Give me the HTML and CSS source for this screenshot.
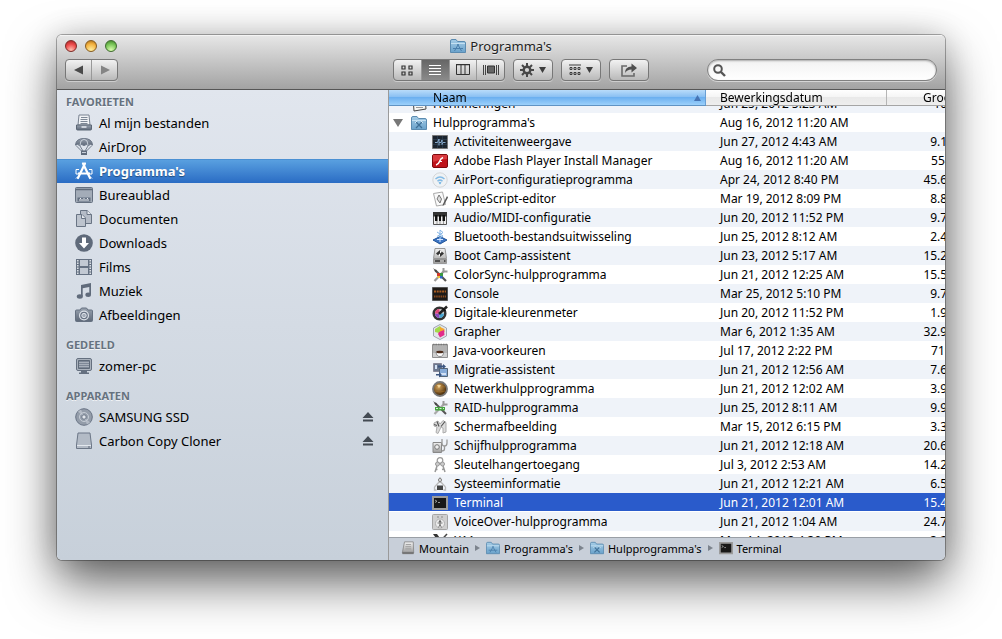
FILE: index.html
```
<!DOCTYPE html>
<html lang="nl">
<head>
  <meta charset="UTF-8">
  <meta name="viewport" content="width=device-width, initial-scale=1.0">
  <title>Programma's</title>
  <link rel="stylesheet" href="styles.css">
</head>
<body>
  <svg class="sprite" aria-hidden="true">
    <defs>
      <linearGradient id="steel" x1="0" y1="0" x2="0" y2="1">
        <stop offset="0" stop-color="#9aa3b0"/>
        <stop offset="1" stop-color="#5d6878"/>
      </linearGradient>
      <linearGradient id="blue" x1="0" y1="0" x2="0" y2="1">
        <stop offset="0" stop-color="#a5cce6"/>
        <stop offset="1" stop-color="#6aa2cb"/>
      </linearGradient>
      <linearGradient id="silver" x1="0" y1="0" x2="0" y2="1">
        <stop offset="0" stop-color="#f2f2f2"/>
        <stop offset="1" stop-color="#9c9c9c"/>
      </linearGradient>
      <radialGradient id="amber" cx="0.4" cy="0.35" r="0.6">
        <stop offset="0" stop-color="#d8a860"/>
        <stop offset="1" stop-color="#4a2c08"/>
      </radialGradient>
    </defs>

    <!-- folders -->
    <symbol id="folder" viewBox="0 0 16 16">
      <path d="M.5 3q0-1.500 1.500-1.500h4l1.500 2H14q1.500 0 1.500 1.500v9.500H.5z" fill="url(#blue)" stroke="#5b8bb0"/>
      <path d="M1 5.500h14" stroke="#c4e0f2"/>
    </symbol>
    <symbol id="folder-apps" viewBox="0 0 16 16">
      <use href="#folder"/>
      <path d="M8.500 6l-4 7M7.500 6l4 7M3 10.500h10" stroke="#4a7fac" fill="none"/>
    </symbol>
    <symbol id="folder-utils" viewBox="0 0 16 16">
      <use href="#folder"/>
      <path d="M5 7l6 6M11 7l-6 6" stroke="#3f6f96" stroke-width="1.300"/>
      <path d="M4 8l2-2M10 6l2 2" stroke="#d3e8f5"/>
    </symbol>

    <!-- sidebar -->
    <symbol id="all-files" viewBox="0 0 18 18">
      <path d="M4 1h10l1 10H3z" fill="#f1f3f6" stroke="#788290"/>
      <path d="M6 3.500h6.500M5.500 5.500h7M5.500 7.500h7M5.500 9.500h7" stroke="#7e8896"/>
      <path d="M1.500 11h15v4q0 1-1 1h-13q-1 0-1-1z" fill="url(#steel)" stroke="#5b6675"/>
      <path d="M6.500 13h5" stroke="#e6eaf0" stroke-width="1.500"/>
    </symbol>
    <symbol id="airdrop" viewBox="0 0 18 18">
      <path d="M.5 7Q1 .5 9 .5T17.500 7Q15.500 5.500 13.500 7.500 11.500 5.500 9 7.500 6.500 5.500 4.500 7.500 2.500 5.500.5 7z" fill="url(#steel)" stroke="#657080"/>
      <path d="M5 7Q5 2 9 1M13 7Q13 2 9 1" stroke="#c9d0da" fill="none"/>
      <path d="M1 7.500l6 6M17 7.500l-6 6M5 8l3 5M13 8l-3 5" stroke="#747f8e" fill="none"/>
      <path d="M6 12.500h6v4.500H6z" fill="#606b7b"/>
      <path d="M7 14.500h4" stroke="#c9d0da"/>
    </symbol>
    <symbol id="apps" viewBox="0 0 18 18">
      <path d="M10 1.500L3 16M8 1.500L15 16" stroke="#fff" stroke-width="2.200" stroke-linecap="round"/>
      <path d="M3 11.500h12" stroke="#fff" stroke-width="2"/>
      <path d="M4 7.500H1V12h2M14 7.500h3V12h-2M1 16.500l2-2M17 16.500l-2-2" stroke="#fff" fill="none"/>
    </symbol>
    <symbol id="desktop" viewBox="0 0 18 18">
      <rect x=".5" y="1.500" width="17" height="15" rx="1" fill="#a3acb8" stroke="#657080"/>
      <path d="M1 3.500h16" stroke="#5f6a79" stroke-width="1.500"/>
      <path d="M2.500 11.500h13v4h-13z" fill="#647081"/>
      <path d="M4 14h10M5 12.500h1M8.500 12.500h1M12 12.500h1" stroke="#e8ecf1"/>
    </symbol>
    <symbol id="documents" viewBox="0 0 18 18">
      <path d="M5.500.500H12l4.500 4v9h-11z" fill="#b5bcc7" stroke="#697484"/>
      <path d="M12 .5v4h4.500" fill="#e6eaef" stroke="#697484"/>
      <path d="M1.500 4.500H7L10.500 8v8.500h-9z" fill="#bdc4ce" stroke="#697484"/>
      <path d="M6.500 4.500v4h4" fill="#e6eaef" stroke="#697484"/>
    </symbol>
    <symbol id="downloads" viewBox="0 0 18 18">
      <circle cx="9" cy="9" r="8.800" fill="#5f6a7a"/>
      <path d="M7 3.500h4V9h3l-5 5.500L4 9h3z" fill="#fff"/>
    </symbol>
    <symbol id="movies" viewBox="0 0 18 18">
      <path d="M1 1h16v16H1z" fill="#657182"/>
      <path d="M5 2h8v6H5zM5 10h8v6H5z" fill="#c2c9d3"/>
      <path d="M2.800 2v15M15.200 2v15" stroke="#e9edf2" stroke-width="1.400" stroke-dasharray="1.500 1"/>
    </symbol>
    <symbol id="music" viewBox="0 0 18 18">
      <path d="M6 3l10-2v11.500h-1.700V5L7.700 6.300v8.200H6z" fill="#606b7b"/>
      <ellipse cx="4.800" cy="14.500" rx="3" ry="2.200" fill="#606b7b"/>
      <ellipse cx="13.200" cy="12.800" rx="2.800" ry="2.200" fill="#606b7b"/>
    </symbol>
    <symbol id="pictures" viewBox="0 0 18 18">
      <path d="M1.500 4H5l1.500-2h5L13 4h3.500q1 0 1 1v9.500q0 1-1 1h-15q-1 0-1-1V5q0-1 1-1z" fill="url(#steel)" stroke="#657080"/>
      <circle cx="9" cy="9.500" r="5" fill="#dde2e9"/>
      <circle cx="9" cy="9.500" r="3.800" fill="#687384"/>
      <circle cx="9" cy="9.500" r="2.200" fill="#a4adb9" stroke="#dfe3ea"/>
    </symbol>
    <symbol id="computer" viewBox="0 0 18 18">
      <rect x="1.500" y="1.500" width="15" height="12" rx="1.500" fill="#aab2bd" stroke="#657080"/>
      <path d="M3.500 3.500h11v8h-11z" fill="#7e8897" stroke="#5f6a79"/>
      <path d="M4 5.500h10M4 7.500h10M4 9.500h10" stroke="#a8b0bb"/>
      <path d="M6 14h6v1.500h2V17H4v-1.500h2z" fill="#657080"/>
    </symbol>
    <symbol id="disc" viewBox="0 0 18 18">
      <circle cx="9" cy="9" r="8.300" fill="#949daa" stroke="#687384"/>
      <path d="M9 9L3 3.500 6 1.500zM9 9l6 5.500-3 2z" fill="#b4bbc6"/>
      <circle cx="9" cy="9" r="4.500" fill="none" stroke="#c6cdd6"/>
      <circle cx="9" cy="9" r="2.200" fill="#e2e6ec" stroke="#6e7989"/>
    </symbol>
    <symbol id="drive" viewBox="0 0 18 18">
      <path d="M3 1h12l1.500 12v3.500h-15V13z" fill="#b3bbc6" stroke="#6c7787"/>
      <path d="M2 13.500h14" stroke="#e3e8ee"/>
      <path d="M13 15h2" stroke="#5e6979"/>
    </symbol>

    <!-- utilities -->
    <symbol id="reminders" viewBox="0 0 16 16">
      <path d="M2 2l12-1 1 12-12 2z" fill="#f7f7f4" stroke="#444"/>
      <path d="M5 9h7M5 11.500h7" stroke="#999"/>
    </symbol>
    <symbol id="activity" viewBox="0 0 16 16">
      <path d="M.5 1.500h15v13H.5z" fill="#1b242e" stroke="#777"/>
      <path d="M1 5.500h14M1 10.500h14M5.500 2v12M10.500 2v12" stroke="#34475a" stroke-width=".6"/>
      <path d="M3 8.500h2.500L7 5v6.500M7 8.500h2L10 6v4.500l1-2h2.500" stroke="#86a9cc" fill="none"/>
    </symbol>
    <symbol id="flash" viewBox="0 0 16 16">
      <rect x=".5" y="1.500" width="15" height="13" rx="1.500" fill="#c0141b" stroke="#7e0a0e"/>
      <path d="M1 2h14v4Q8 6 1 9z" fill="#d93a3e"/>
      <path d="M4 12q2.500-.5 3.500-3.500T11 4.500" stroke="#fff" stroke-width="1.500" fill="none"/>
      <path d="M7.500 8.500H10" stroke="#fff"/>
    </symbol>
    <symbol id="airport" viewBox="0 0 16 16">
      <circle cx="8" cy="8" r="7.200" fill="#eff2f5" stroke="#d3d6d9"/>
      <path d="M3.500 7q4.500-4 9 0M5.500 9.300q2.500-2.300 5 0" stroke="#84bbe6" stroke-width="1.500" fill="none"/>
      <path d="M6.500 10.500q1.500-1 3 0L8 12.500z" fill="#6bb0e2"/>
    </symbol>
    <symbol id="applescript" viewBox="0 0 16 16">
      <path d="M1.500 2.500l9-1.500 3 12.500-9 1.500z" fill="#fafafa" stroke="#aaa"/>
      <path d="M7 4l2.500 4L8 12 5 8z" fill="#ddd" stroke="#777"/>
      <path d="M15 5l-4 8-.5 2 1.500-1 4-7.500z" fill="#555"/>
    </symbol>
    <symbol id="midi" viewBox="0 0 16 16">
      <path d="M1.500 2.500h13v12h-13z" fill="#eee" stroke="#555"/>
      <path d="M1 2h14v4.500H1z" fill="#333"/>
      <path d="M3 5h2.500v6H3zM7 5h2v6H7zM10.500 5H13v6h-2.500z" fill="#111"/>
      <path d="M5 11v3M8 11v3M11.500 11v3" stroke="#777" stroke-width=".7"/>
    </symbol>
    <symbol id="bluetooth" viewBox="0 0 16 16">
      <path d="M1 11l7-3.500 7 3.500-7 4z" fill="#3b74c4" stroke="#205498"/>
      <path d="M5 10.500h6M8 9v4" stroke="#d6e8ff"/>
      <path d="M8 9V1l3 2.500-6 4M8 9l3-2-6-4" fill="none" stroke="#86b6e6"/>
    </symbol>
    <symbol id="bootcamp" viewBox="0 0 16 16">
      <path d="M3 .5h10l1.500 10v5h-13v-5z" fill="url(#silver)" stroke="#999"/>
      <path d="M8 2l4 3.500L8 9 4 5.500z" fill="#333"/>
      <path d="M8 2l2 1.800-2 1.700zM8 9L6 7.200l2-1.700z" fill="#fff"/>
      <path d="M2 11h12" stroke="#777"/>
      <path d="M3 13h5M12 13h1.500" stroke="#333" stroke-width="1.500"/>
    </symbol>
    <symbol id="colorsync" viewBox="0 0 16 16">
      <path d="M3 3l11 11" stroke="#555" stroke-width="2.200"/>
      <path d="M12 4L2.500 14" stroke="#999" stroke-width="2.200"/>
      <path d="M1 1l4 3-1 1.500z" fill="#444"/>
      <path d="M11.500 1v3.500h4" fill="none" stroke="#999" stroke-width="2"/>
      <path d="M5 6h3v3H5z" fill="#d33a2c"/>
      <path d="M8 6h3v3H8z" fill="#3a9a42"/>
      <path d="M8 9h2.500v2.500H8z" fill="#2f66c9"/>
      <path d="M5.500 9H8v2H5.500z" fill="#eec73b"/>
    </symbol>
    <symbol id="console" viewBox="0 0 16 16">
      <path d="M.5 1.500h15v13H.5z" fill="#1d1a18" stroke="#555"/>
      <path d="M2 5.500h12" stroke="#a85c22" stroke-width="2" stroke-dasharray="2 .7"/>
      <path d="M2 10.500h12" stroke="#8c4a1c" stroke-width="2" stroke-dasharray="1.500 .7"/>
    </symbol>
    <symbol id="colormeter" viewBox="0 0 16 16">
      <circle cx="7.500" cy="8.500" r="5.800" fill="#ddd" stroke="#333" stroke-width="2.500"/>
      <path d="M7.500 8.500V13A4.500 4.500 0 0 1 3 8.500z" fill="#8a49bf"/>
      <path d="M7.500 8.500H3A4.500 4.500 0 0 1 7.500 4z" fill="#e3477b"/>
      <path d="M7.500 8.500H12A4.500 4.500 0 0 1 7.500 13z" fill="#45a4cf"/>
      <path d="M15 1.500L7 9" stroke="#222" stroke-width="2.500"/>
      <path d="M10.500 3l3 3" stroke="#111" stroke-width="1.500"/>
    </symbol>
    <symbol id="grapher" viewBox="0 0 16 16">
      <path d="M8 .5l6.500 3.500v8L8 15.500 1.500 12V4z" fill="#e3e5ea" stroke="#a2a6b0"/>
      <path d="M3 5l5-3 2 3-3 4-4-1z" fill="#a3d94a"/>
      <path d="M8 3l4.500 2v3L8 9z" fill="#f3a52c"/>
      <path d="M7 8l5-2 .5 5L8 13.500 6 10z" fill="#e22b8b"/>
    </symbol>
    <symbol id="java" viewBox="0 0 16 16">
      <path d="M.5 1.500h15v13H.5z" fill="#b2b2b2" stroke="#909090"/>
      <path d="M1 1.500h14" stroke="#777" stroke-width="1.500" stroke-dasharray="1.500 1"/>
      <path d="M1 10h14v4H1z" fill="#cfcfcf"/>
      <path d="M4 9h7.500q0 4.500-3.500 4.500T4 9z" fill="#fff" stroke="#777" stroke-width=".8"/>
      <ellipse cx="7.800" cy="9" rx="3.500" ry="1.300" fill="#4c2a17"/>
    </symbol>
    <symbol id="migration" viewBox="0 0 16 16">
      <path d="M1.500 1.500h8v8h-8z" fill="#6a7890" stroke="#889"/>
      <path d="M7.500 6.500h8v8h-8z" fill="#86abd8" stroke="#567"/>
      <path d="M3 3h2v4H3zM9 11h5v2H9z" fill="#d2e1f5"/>
      <path d="M4 12h3v-2l3 3-3 2.500v-2H4zM6 3.500h5V2l3 2.500L11 7V5.500H6z" fill="#3a5580"/>
    </symbol>
    <symbol id="network" viewBox="0 0 16 16">
      <circle cx="8" cy="8" r="7" fill="url(#amber)" stroke="#777" stroke-width="1.800"/>
      <path d="M3 6q5-2 10 0M3 10q5 2 10 0" stroke="#b07a30" stroke-width=".5" fill="none"/>
      <path d="M5 4.500q2-1.500 4 0L7 7z" fill="#f0d49a"/>
    </symbol>
    <symbol id="raid" viewBox="0 0 16 16">
      <path d="M3 3l11 11" stroke="#555" stroke-width="2"/>
      <path d="M12 4L2.500 14" stroke="#aaa" stroke-width="2.200"/>
      <path d="M1 1l4 3-1 1.500z" fill="#444"/>
      <path d="M11.500 1v3.500h4" fill="none" stroke="#999" stroke-width="2"/>
      <path d="M3 7h10v3.500H3z" fill="#46a441"/>
      <path d="M4 8.500h2M7.500 8.500h2M11 8.500h1" stroke="#d3f3cf"/>
    </symbol>
    <symbol id="grab" viewBox="0 0 16 16">
      <path d="M2 4l4-2 2 3 3-3.500 3 2V13l-3 1V9l-2-1-3 6.500-2-1L5 8 2 7z" fill="#dcdcdc" stroke="#adadad"/>
      <path d="M5 2.500l2 5M13 2.500l-4 5M2 5.500l3 1" stroke="#555" stroke-width="1.200"/>
    </symbol>
    <symbol id="diskutil" viewBox="0 0 16 16">
      <path d="M1 4.500h8.500v10H1z" fill="url(#silver)" stroke="#888"/>
      <circle cx="5" cy="9" r="2.300" fill="#eee" stroke="#777"/>
      <path d="M10 1v4q0 3 2.500 3T15 5V1.500M12.500 8v3q0 2-3 2" stroke="#999" stroke-width="1.300" fill="none"/>
    </symbol>
    <symbol id="keychain" viewBox="0 0 16 16">
      <circle cx="8" cy="3.500" r="2.800" fill="none" stroke="#999" stroke-width="1.200"/>
      <circle cx="5.500" cy="7" r="2" fill="#ccc" stroke="#999"/>
      <circle cx="10.500" cy="7" r="2" fill="#ccc" stroke="#999"/>
      <path d="M5 9l-2 6M11 9l2 6M3.500 12l2 .5M12 12l-2 .5" stroke="#999" stroke-width="1.500"/>
    </symbol>
    <symbol id="sysinfo" viewBox="0 0 16 16">
      <path d="M8 1v4M8 5l-5.500 6M8 5l5.500 6M2.500 11v3h2M13.500 11v3h-2" stroke="#bbb" stroke-width="1.300" fill="none"/>
      <circle cx="8" cy="4" r="1.600" fill="#ddd" stroke="#888"/>
      <path d="M5 9.500h6v4.500H5z" fill="#444"/>
    </symbol>
    <symbol id="terminal" viewBox="0 0 16 16">
      <path d="M1 2h14v12H1z" fill="#181818" stroke="#9b9b9b" stroke-width="2"/>
      <path d="M3 5l2 1.300L3 7.500M6 7.500h2" stroke="#bbb" stroke-width=".8" fill="none"/>
    </symbol>
    <symbol id="voiceover" viewBox="0 0 16 16">
      <rect x=".5" y=".5" width="15" height="15" rx="1" fill="#cfcfcf" stroke="#a5a5a5"/>
      <circle cx="8" cy="9.500" r="4.500" fill="#efefef" stroke="#b0b0b0"/>
      <path d="M5 3h2M9 3h2" stroke="#888"/>
      <circle cx="8" cy="7.500" r="1.200" fill="#666"/>
      <path d="M5.500 9h5M8 9v2M8 10.500l-1.500 3M8 10.500l1.500 3" stroke="#777"/>
    </symbol>
    <symbol id="x11" viewBox="0 0 16 16">
      <path d="M1 1h4l10 14h-4z" fill="#333"/>
      <path d="M15 1L2 15" stroke="#444" stroke-width="1.500"/>
    </symbol>
    <symbol id="harddisk" viewBox="0 0 16 16">
      <path d="M4 1h10l.5 12.500H1.500z" fill="url(#silver)" stroke="#8a8a8a"/>
      <path d="M1.500 12.500h13v2.500h-13z" fill="#777"/>
      <path d="M5.500 4h6M5 6.500h6.500M5 9h6.500" stroke="#999"/>
    </symbol>

    <symbol id="eject" viewBox="0 0 12 12">
      <path d="M6 1l5.500 6H.5zM1 8.500h10v2H1z" fill="#444b53"/>
    </symbol>
  </svg>

  <main class="window">
    <header class="titlebar">
      <div class="title-row">
        <div class="lights">
          <button class="light red" aria-label="Sluit"></button>
          <button class="light yellow" aria-label="Minimaliseer"></button>
          <button class="light green" aria-label="Zoom"></button>
        </div>
        <h1 class="title"><svg class="icon"><use href="#folder-apps"/></svg>Programma's</h1>
        <div class="title-end"></div>
      </div>
      <div class="toolbar">
        <div class="nav">
          <div class="group history">
            <button class="tool" aria-label="Vorige"><svg width="10" height="10"><path d="M0 5l9-4.500v9z" fill="#4a4a4a"/></svg></button>
            <button class="tool" aria-label="Volgende"><svg width="10" height="10"><path d="M10 5L1 .5v9z" fill="#858585"/></svg></button>
          </div>
        </div>
        <div class="group views">
          <button class="tool" aria-label="Symbolen">
            <svg width="12" height="11"><path d="M1 1h3v3H1zM8 1h3v3H8zM1 7h3v3H1zM8 7h3v3H8z" fill="none" stroke="#333" stroke-width="1.200"/></svg>
          </button>
          <button class="tool active" aria-label="Lijst">
            <svg width="12" height="12"><path d="M0 1.500h12M0 4.500h12M0 7.500h12M0 10.500h12" stroke="#fff"/></svg>
          </button>
          <button class="tool" aria-label="Kolommen">
            <svg width="14" height="12"><path d="M.5.500h13v10H.5zM5 .5v10M9 .5v10" fill="none" stroke="#333"/><path d="M0 .5h14" stroke="#333" stroke-width="1.500"/></svg>
          </button>
          <button class="tool" aria-label="Cover Flow">
            <svg width="16" height="12"><path d="M.5 1v10M2.500 1v10M13.500 1v10M15.500 1v10" stroke="#444"/><path d="M4.500 2h7v7h-7z" fill="#666" stroke="#333"/></svg>
          </button>
        </div>
        <button class="tool solo" aria-label="Taak">
          <svg width="14" height="14" viewBox="0 0 14 14"><circle cx="7" cy="7" r="3.300" fill="none" stroke="#484848" stroke-width="2.400"/><path d="M7 0v3M7 11v3M0 7h3M11 7h3M2 2l2.200 2.200M9.800 9.800L12 12M12 2L9.800 4.200M4.200 9.800L2 12" stroke="#484848" stroke-width="2"/></svg>
          <svg width="7" height="6"><path d="M0 0h7L3.500 6z" fill="#3d3d3d"/></svg>
        </button>
        <button class="tool solo" aria-label="Orden">
          <svg width="12" height="12"><path d="M0 1h12" stroke="#3d3d3d"/><path d="M1 3.500h2v2H1zM5 3.500h2v2H5zM9 3.500h2v2H9zM1 8.500h2v2H1zM5 8.500h2v2H5zM9 8.500h2v2H9z" fill="none" stroke="#3d3d3d"/></svg>
          <svg width="7" height="6"><path d="M0 0h7L3.500 6z" fill="#3d3d3d"/></svg>
        </button>
        <button class="tool solo" aria-label="Deel">
          <svg width="16" height="14" viewBox="0 0 16 14"><path d="M6 3H1v10h12v-3" fill="none" stroke="#6a6a6a" stroke-width="1.600"/><path d="M4 10q0-6.500 6.500-6.500V.5L16 5l-5.500 4.500V6.500Q6 6.500 4 10z" fill="#505050"/></svg>
        </button>
        <label class="search">
          <svg width="13" height="13"><circle cx="5" cy="5" r="3.800" fill="none" stroke="#555" stroke-width="2"/><path d="M8 8l4 4" stroke="#555" stroke-width="2.400"/></svg>
          <input type="search" aria-label="Zoek">
        </label>
      </div>
    </header>

    <div class="content">
      <nav class="sidebar">
        <h2>FAVORIETEN</h2>
        <ul>
          <li><a href="#"><svg class="icon"><use href="#all-files"/></svg>Al mijn bestanden</a></li>
          <li><a href="#"><svg class="icon"><use href="#airdrop"/></svg>AirDrop</a></li>
          <li class="current"><a href="#"><svg class="icon"><use href="#apps"/></svg>Programma's</a></li>
          <li><a href="#"><svg class="icon"><use href="#desktop"/></svg>Bureaublad</a></li>
          <li><a href="#"><svg class="icon"><use href="#documents"/></svg>Documenten</a></li>
          <li><a href="#"><svg class="icon"><use href="#downloads"/></svg>Downloads</a></li>
          <li><a href="#"><svg class="icon"><use href="#movies"/></svg>Films</a></li>
          <li><a href="#"><svg class="icon"><use href="#music"/></svg>Muziek</a></li>
          <li><a href="#"><svg class="icon"><use href="#pictures"/></svg>Afbeeldingen</a></li>
        </ul>
        <h2>GEDEELD</h2>
        <ul>
          <li><a href="#"><svg class="icon"><use href="#computer"/></svg>zomer-pc</a></li>
        </ul>
        <h2>APPARATEN</h2>
        <ul>
          <li><a href="#"><svg class="icon"><use href="#disc"/></svg>SAMSUNG SSD</a><button class="eject" aria-label="Verwijder SAMSUNG SSD"><svg><use href="#eject"/></svg></button></li>
          <li><a href="#"><svg class="icon"><use href="#drive"/></svg>Carbon Copy Cloner</a><button class="eject" aria-label="Verwijder Carbon Copy Cloner"><svg><use href="#eject"/></svg></button></li>
        </ul>
      </nav>

      <section class="files">
        <div class="list" id="list">
          <table>
            <colgroup>
              <col>
              <col class="col-date">
              <col class="col-size">
            </colgroup>
            <thead>
              <tr>
                <th class="sorted"><button>Naam <svg width="7" height="6"><path d="M3.500 0L7 6H0z" fill="#4674b4"/></svg></button></th>
                <th><button>Bewerkingsdatum</button></th>
                <th class="size"><button>Grootte</button></th>
              </tr>
            </thead>
            <tbody>
              <tr><td class="parent"><div><svg class="icon"><use href="#reminders"/></svg>Herinneringen</div></td><td>Jun 25, 2012 5:25 AM</td><td>10 MB</td></tr>
              <tr><td class="parent"><div><button class="toggle" aria-label="Vouw in"><svg width="10" height="8"><path d="M0 0h10L5 8z" fill="#777"/></svg></button><svg class="icon"><use href="#folder-utils"/></svg>Hulpprogramma's</div></td><td>Aug 16, 2012 11:20 AM</td><td></td></tr>
              <tr><td><div><svg class="icon"><use href="#activity"/></svg>Activiteitenweergave</div></td><td>Jun 27, 2012 4:43 AM</td><td>9.1 MB</td></tr>
              <tr><td><div><svg class="icon"><use href="#flash"/></svg>Adobe Flash Player Install Manager</div></td><td>Aug 16, 2012 11:20 AM</td><td>554 kB</td></tr>
              <tr><td><div><svg class="icon"><use href="#airport"/></svg>AirPort-configuratieprogramma</div></td><td>Apr 24, 2012 8:40 PM</td><td>45.6 MB</td></tr>
              <tr><td><div><svg class="icon"><use href="#applescript"/></svg>AppleScript-editor</div></td><td>Mar 19, 2012 8:09 PM</td><td>8.8 MB</td></tr>
              <tr><td><div><svg class="icon"><use href="#midi"/></svg>Audio/MIDI-configuratie</div></td><td>Jun 20, 2012 11:52 PM</td><td>9.7 MB</td></tr>
              <tr><td><div><svg class="icon"><use href="#bluetooth"/></svg>Bluetooth-bestandsuitwisseling</div></td><td>Jun 25, 2012 8:12 AM</td><td>2.4 MB</td></tr>
              <tr><td><div><svg class="icon"><use href="#bootcamp"/></svg>Boot Camp-assistent</div></td><td>Jun 23, 2012 5:17 AM</td><td>15.2 MB</td></tr>
              <tr><td><div><svg class="icon"><use href="#colorsync"/></svg>ColorSync-hulpprogramma</div></td><td>Jun 21, 2012 12:25 AM</td><td>15.5 MB</td></tr>
              <tr><td><div><svg class="icon"><use href="#console"/></svg>Console</div></td><td>Mar 25, 2012 5:10 PM</td><td>9.7 MB</td></tr>
              <tr><td><div><svg class="icon"><use href="#colormeter"/></svg>Digitale-kleurenmeter</div></td><td>Jun 20, 2012 11:52 PM</td><td>1.9 MB</td></tr>
              <tr><td><div><svg class="icon"><use href="#grapher"/></svg>Grapher</div></td><td>Mar 6, 2012 1:35 AM</td><td>32.9 MB</td></tr>
              <tr><td><div><svg class="icon"><use href="#java"/></svg>Java-voorkeuren</div></td><td>Jul 17, 2012 2:22 PM</td><td>719 kB</td></tr>
              <tr><td><div><svg class="icon"><use href="#migration"/></svg>Migratie-assistent</div></td><td>Jun 21, 2012 12:56 AM</td><td>7.6 MB</td></tr>
              <tr><td><div><svg class="icon"><use href="#network"/></svg>Netwerkhulpprogramma</div></td><td>Jun 21, 2012 12:02 AM</td><td>3.9 MB</td></tr>
              <tr><td><div><svg class="icon"><use href="#raid"/></svg>RAID-hulpprogramma</div></td><td>Jun 25, 2012 8:11 AM</td><td>9.9 MB</td></tr>
              <tr><td><div><svg class="icon"><use href="#grab"/></svg>Schermafbeelding</div></td><td>Mar 15, 2012 6:15 PM</td><td>3.3 MB</td></tr>
              <tr><td><div><svg class="icon"><use href="#diskutil"/></svg>Schijfhulpprogramma</div></td><td>Jun 21, 2012 12:18 AM</td><td>20.6 MB</td></tr>
              <tr><td><div><svg class="icon"><use href="#keychain"/></svg>Sleutelhangertoegang</div></td><td>Jul 3, 2012 2:53 AM</td><td>14.2 MB</td></tr>
              <tr><td><div><svg class="icon"><use href="#sysinfo"/></svg>Systeeminformatie</div></td><td>Jun 21, 2012 12:21 AM</td><td>6.5 MB</td></tr>
              <tr class="selected"><td><div><svg class="icon"><use href="#terminal"/></svg>Terminal</div></td><td>Jun 21, 2012 12:01 AM</td><td>15.4 MB</td></tr>
              <tr><td><div><svg class="icon"><use href="#voiceover"/></svg>VoiceOver-hulpprogramma</div></td><td>Jun 21, 2012 1:04 AM</td><td>24.7 MB</td></tr>
              <tr><td><div><svg class="icon"><use href="#x11"/></svg>X11</div></td><td>May 14, 2012 4:30 PM</td><td>3.2 MB</td></tr>
            </tbody>
          </table>
        </div>
        <nav class="path">
          <a href="#"><svg class="icon"><use href="#harddisk"/></svg>Mountain</a>
          <a href="#"><svg class="icon"><use href="#folder-apps"/></svg>Programma's</a>
          <a href="#"><svg class="icon"><use href="#folder-utils"/></svg>Hulpprogramma's</a>
          <a href="#"><svg class="icon"><use href="#terminal"/></svg>Terminal</a>
        </nav>
      </section>
    </div>
  </main>

  <script>
    document.getElementById("list").scrollTop = 12;
  </script>
</body>
</html>
```
FILE: styles.css
```
* {
  box-sizing: border-box;
}
body {
  margin: 0;
  height: 100vh;
  padding: 35px 57px 79px;
  background-color: #fff;
  font-family: "Lucida Grande", "Noto Sans", sans-serif;
  font-size: 13px;
  color: #000;
}
button {
  font: inherit;
  border: none;
  padding: 0;
  background: none;
}
a {
  color: inherit;
  text-decoration: none;
}
.sprite {
  position: absolute;
  width: 0;
  height: 0;
}
.icon {
  flex: none;
  width: 16px;
  height: 16px;
}
.window {
  display: flex;
  flex-direction: column;
  height: 100%;
  border-radius: 5px;
  overflow: hidden;
  box-shadow: 0 0 0 1px rgba(0, 0, 0, 0.3), 0 0 30px rgba(0, 0, 0, 0.15), 0 22px 50px rgba(0, 0, 0, 0.62);
}

/* title bar */
.titlebar {
  background: linear-gradient(#e6e6e6, #a3a3a3);
  border-top: 1px solid #f4f4f4;
  border-bottom: 1px solid #565656;
}
.title-row {
  display: flex;
  align-items: center;
  height: 20px;
  padding: 0 8px;
}
.lights, .title-end {
  flex: 1;
}
.lights {
  display: flex;
  gap: 8px;
}
.light {
  width: 12px;
  height: 12px;
  border-radius: 50%;
  border: 1px solid #555;
}
.red {
  background: radial-gradient(circle at 50% 90%, #ffc0b0, #ee4d4d 55%, #a02020);
  border-color: #7c2a26;
}
.yellow {
  background: radial-gradient(circle at 50% 90%, #fff0a0, #f3b13f 60%, #a56a14);
  border-color: #855b20;
}
.green {
  background: radial-gradient(circle at 50% 90%, #dcffb0, #76c355 60%, #3c7a25);
  border-color: #3f6a2f;
}
.title {
  display: flex;
  align-items: center;
  gap: 4px;
  margin: 0;
  font-size: 13px;
  font-weight: normal;
  color: #222;
  text-shadow: 0 1px 0 rgba(255, 255, 255, 0.6);
}
.toolbar {
  display: flex;
  gap: 8px;
  height: 33px;
  padding: 3px 8px 8px;
}
.nav {
  flex: 0 0 320px;
}
.group, .solo {
  display: flex;
  height: 22px;
  border: 1px solid #777;
  border-radius: 4px;
  background: linear-gradient(#f2f2f2, #b9b9b9);
  box-shadow: 0 1px 0 rgba(255, 255, 255, 0.4);
}
.group {
  overflow: hidden;
}
.history {
  width: 53px;
}
.views {
  width: 112px;
}
.tool {
  display: flex;
  align-items: center;
  justify-content: center;
  gap: 5px;
}
.group .tool {
  flex: 1;
}
.group .tool + .tool {
  border-left: 1px solid #999;
}
.active {
  background: linear-gradient(#666, #8a8a8a);
}
.solo {
  width: 40px;
}
.search {
  display: flex;
  align-items: center;
  gap: 4px;
  width: 230px;
  height: 22px;
  margin-left: auto;
  padding: 0 8px 0 5px;
  border: 1px solid #808080;
  border-radius: 11px;
  background: linear-gradient(#f2f2f2, #fff);
  box-shadow: inset 0 1px 2px rgba(0, 0, 0, 0.3), 0 1px 0 rgba(255, 255, 255, 0.5);
}
.search input {
  flex: 1;
  min-width: 0;
  border: none;
  outline: none;
  background: none;
  font: inherit;
}

.content {
  display: flex;
  flex: 1;
  min-height: 0;
}

/* sidebar */
.sidebar {
  flex: 0 0 331px;
  padding-top: 3px;
  background: linear-gradient(#e1e6ee, #c7d0da);
}
.sidebar h2 {
  margin: 0;
  padding-left: 9px;
  font-size: 11px;
  line-height: 18px;
  color: #66727f;
  text-shadow: 0 1px 0 rgba(255, 255, 255, 0.7);
}
.sidebar ul {
  list-style: none;
  margin: 0 0 9px;
  padding: 0;
}
.sidebar li {
  display: flex;
  align-items: center;
  height: 24px;
  padding: 0 14px 0 18px;
}
.sidebar a {
  flex: 1;
  display: flex;
  align-items: center;
  gap: 6px;
}
.sidebar .icon {
  width: 18px;
  height: 18px;
}
.sidebar .current {
  background: linear-gradient(#5ba2e1, #2a6cc4);
  box-shadow: inset 0 1px 0 #4a90d3;
  color: #fff;
  font-weight: bold;
  text-shadow: 0 1px 1px rgba(0, 0, 0, 0.4);
}
.eject, .eject svg {
  display: block;
  width: 12px;
  height: 12px;
}

/* file list */
.files {
  flex: 1;
  min-width: 0;
  display: flex;
  flex-direction: column;
  border-left: 1px solid #9a9a9a;
}
.list {
  flex: 1;
  min-height: 0;
  overflow: auto;
  scrollbar-width: none;
  background-color: #fff;
}
table {
  width: calc(100% + 34px);
  table-layout: fixed;
  border-collapse: separate;
  border-spacing: 0;
  font-size: 12px;
}
.col-date {
  width: 181px;
}
.col-size {
  width: 92px;
}
th {
  position: sticky;
  top: 0;
  height: 16px;
  padding: 0;
  background: linear-gradient(#fff, #f4f4f4 50%, #e9e9e9 50%, #eee);
  border-bottom: 1px solid #a5a5a5;
  font-weight: normal;
  line-height: 15px;
}
th button {
  display: flex;
  align-items: center;
  justify-content: space-between;
  width: 100%;
  height: 15px;
  padding: 0 4px 0 14px;
  border-right: 1px solid #b5b5b5;
}
th.sorted {
  background: linear-gradient(#b9dcfa, #85bdf2 50%, #6cb0f0 50%, #9bd0fb);
  border-bottom-color: #5f93c4;
}
th.sorted button {
  padding-left: 44px;
  border-right-color: #6a9fd4;
}
th.size button {
  padding-left: 36px;
}
td {
  height: 19px;
  padding: 0 10px 0 14px;
  line-height: 19px;
  white-space: nowrap;
}
td:first-child {
  padding-left: 43px;
}
td.parent {
  padding-left: 22px;
}
td:last-child {
  text-align: right;
}
td div {
  display: flex;
  align-items: center;
  gap: 6px;
}
.toggle {
  width: 10px;
  height: 8px;
  margin-left: -18px;
  margin-right: 2px;
}
.toggle svg {
  display: block;
}
tbody tr:nth-child(odd) {
  background-color: #eff3f9;
}
tbody .selected:nth-child(even) {
  background-color: #2a5bcb;
  color: #fff;
}
.selected td {
  box-shadow: inset 0 -1px 0 #fff;
}

/* path bar */
.path {
  display: flex;
  align-items: center;
  height: 23px;
  padding: 0 12px 2px;
  border-top: 1px solid #9a9fa6;
  background-color: #c8cfd9;
  font-size: 11px;
}
.path a {
  display: flex;
  align-items: center;
  gap: 4px;
}
.path .icon {
  width: 14px;
  height: 14px;
}
.path a:not(:last-child)::after {
  content: "";
  margin: 0 6px 0 2px;
  border-left: 5px solid #7c838d;
  border-top: 3px solid transparent;
  border-bottom: 3px solid transparent;
}
```
